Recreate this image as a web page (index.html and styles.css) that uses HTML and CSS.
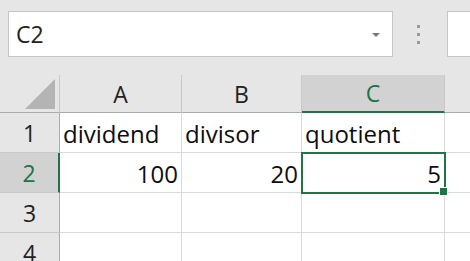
FILE: index.html
```html
<!DOCTYPE html>
<html lang="en">
<head>
  <meta charset="UTF-8" />
  <title>Sheet</title>
  <link rel="stylesheet" href="styles.css">
</head>
<body>

<div class="toolbar">
  <div class="name-box">
    <span class="name-text">C2</span>
    <span class="name-arrow"></span>
  </div>
  <div class="grip">
    <span></span><span></span><span></span>
  </div>
  <div class="formula-box"></div>
</div>

<div class="sheet">
  <div class="hd corner"><span class="corner-tri"></span></div>
  <div class="hd col">A</div>
  <div class="hd col">B</div>
  <div class="hd col sel-col">C</div>
  <div class="hd col"></div>

  <div class="hd row">1</div>
  <div class="cell">dividend</div>
  <div class="cell">divisor</div>
  <div class="cell">quotient</div>
  <div class="cell"></div>

  <div class="hd row sel-row">2</div>
  <div class="cell num">100</div>
  <div class="cell num">20</div>
  <div class="cell num active">5<span class="handle"></span></div>
  <div class="cell"></div>

  <div class="hd row">3</div>
  <div class="cell"></div>
  <div class="cell"></div>
  <div class="cell"></div>
  <div class="cell"></div>

  <div class="hd row">4</div>
  <div class="cell"></div>
  <div class="cell"></div>
  <div class="cell"></div>
  <div class="cell"></div>
</div>

</body>
</html>
```

FILE: styles.css
```css
body {
  margin: 0;
  background: #fff;
  font-family: "Open Sans", "Noto Sans", sans-serif;
  color: #111;
  overflow: hidden;
}
.toolbar {
  display: flex;
  align-items: flex-start;
  height: 75px;
  background: #e6e6e6;
  padding: 11px 0 0 8px;
  box-sizing: border-box;
  overflow: hidden;
}
.name-box {
  position: relative;
  flex-shrink: 0;
  width: 385px;
  height: 46px;
  background: #fff;
  border: 1px solid #c6c6c6;
  box-sizing: border-box;
  display: flex;
  align-items: center;
  padding-left: 7px;
}
.name-text {
  font-size: 23px;
  color: #222;
}
.name-arrow {
  position: absolute;
  right: 12px;
  top: 21px;
  border-left: 4px solid transparent;
  border-right: 4px solid transparent;
  border-top: 4px solid #777;
}
.grip {
  flex-shrink: 0;
  display: flex;
  flex-direction: column;
  gap: 5px;
  margin: 14px 0 0 24px;
}
.grip span {
  width: 3px;
  height: 3px;
  background: #9a9a9a;
}
.formula-box {
  flex-shrink: 0;
  margin-left: 27px;
  width: 60px;
  height: 46px;
  background: #fff;
  border: 1px solid #c6c6c6;
  box-sizing: border-box;
}
.sheet {
  display: grid;
  grid-template-columns: 60px 122px 120px 143px 40px;
  grid-template-rows: 38px 40px 40px 40px 40px;
}
.hd {
  background: #e6e6e6;
  color: #222;
  font-size: 23px;
  display: flex;
  align-items: center;
  justify-content: center;
  box-sizing: border-box;
}
.col {
  border-right: 1px solid #c9c9c9;
  border-bottom: 1px solid #ababab;
}
.row {
  border-right: 1px solid #ababab;
  border-bottom: 1px solid #c9c9c9;
}
.corner {
  position: relative;
  border-right: 1px solid #c9c9c9;
  border-bottom: 1px solid #ababab;
}
.corner-tri {
  position: absolute;
  right: 4px;
  bottom: 3px;
  width: 30px;
  height: 30px;
  background: #b4b4b4;
  clip-path: polygon(100% 0, 100% 100%, 0 100%);
}
.sel-col {
  background: #d2d2d2;
  color: #217346;
  border-bottom: 2px solid #217346;
}
.sel-row {
  background: #d2d2d2;
  color: #217346;
  border-right: 2px solid #217346;
}
.cell {
  font-size: 24px;
  display: flex;
  align-items: center;
  padding: 2px 3px 0;
  border-right: 1px solid #d9d9d9;
  border-bottom: 1px solid #d9d9d9;
  box-sizing: border-box;
  white-space: nowrap;
  color: #0d0d0d;
}
.num {
  justify-content: flex-end;
}
.active {
  position: relative;
  outline: 2px solid #217346;
  outline-offset: -1px;
}
.handle {
  position: absolute;
  right: -4px;
  bottom: -4px;
  width: 7px;
  height: 7px;
  background: #217346;
  border: 1px solid #fff;
}
```
